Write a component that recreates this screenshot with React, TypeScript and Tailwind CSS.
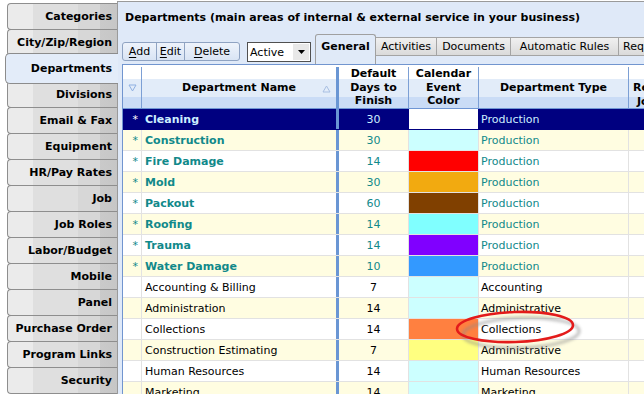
import React from "react";

const sideTabs = [
  "Categories",
  "City/Zip/Region",
  "Departments",
  "Divisions",
  "Email & Fax",
  "Equipment",
  "HR/Pay Rates",
  "Job",
  "Job Roles",
  "Labor/Budget",
  "Mobile",
  "Panel",
  "Purchase Order",
  "Program Links",
  "Security",
];

const departments = [
  { star: true, name: "Cleaning", days: 30, color: "#ffffff", type: "Production" },
  { star: true, name: "Construction", days: 30, color: "#ccffff", type: "Production" },
  { star: true, name: "Fire Damage", days: 14, color: "#ff0000", type: "Production" },
  { star: true, name: "Mold", days: 30, color: "#f2aa10", type: "Production" },
  { star: true, name: "Packout", days: 60, color: "#804000", type: "Production" },
  { star: true, name: "Roofing", days: 14, color: "#80ffff", type: "Production" },
  { star: true, name: "Trauma", days: 14, color: "#8000ff", type: "Production" },
  { star: true, name: "Water Damage", days: 10, color: "#3399ff", type: "Production" },
  { star: false, name: "Accounting & Billing", days: 7, color: "#ccffff", type: "Accounting" },
  { star: false, name: "Administration", days: 14, color: "#ccffff", type: "Administrative" },
  { star: false, name: "Collections", days: 14, color: "#ff8040", type: "Collections" },
  { star: false, name: "Construction Estimating", days: 7, color: "#ffff80", type: "Administrative" },
  { star: false, name: "Human Resources", days: 14, color: "#ccffff", type: "Human Resources" },
  { star: false, name: "Marketing", days: 14, color: "#ccffff", type: "Marketing" },
];

const tabBg =
  "bg-[linear-gradient(90deg,#ebebeb_0%,#ebebeb_23%,#dfdfdf_23%,#dfdfdf_64%,#d7d7d7_64%,#d7d7d7_84%,#cacaca_84%,#c6c6c6_100%)]";

const grayTab =
  "mt-[3px] flex h-[19px] shrink-0 items-center border border-l-0 border-[#a4a4a4] bg-[linear-gradient(#f0f0f0,#dadada)]";

function SideTab({ label, selected }: { label: string; selected: boolean }) {
  if (selected) {
    return (
      <div className="relative z-10 -mt-[3px] -mb-[2px] ml-[5px] mr-[-1px] flex h-[31px] items-center justify-end rounded-l-[5px] border border-r-0 border-[#8c8c8c] bg-[#e3ecf9] pr-[6px] font-bold">
        {label}
      </div>
    );
  }
  return (
    <div
      className={`-mt-px ml-[7px] flex h-[27px] items-center justify-end rounded-l-[4px] border border-r-0 border-[#8e8e8e] pr-[5px] font-bold first:mt-[3px] ${tabBg}`}
    >
      {label}
    </div>
  );
}

function Key({ k, rest }: { k: string; rest: string }) {
  return (
    <span>
      <span className="underline underline-offset-2">{k}</span>
      {rest}
    </span>
  );
}

export default function App() {
  return (
    <div className="relative flex h-[394px] w-[644px] overflow-hidden bg-white font-['DejaVu_Sans',sans-serif] text-[11px] leading-[13px] text-black">
      {/* Side tabs */}
      <div className="flex w-[117px] shrink-0 flex-col">
        {sideTabs.map((t) => (
          <SideTab key={t} label={t} selected={t === "Departments"} />
        ))}
      </div>

      {/* Main panel */}
      <div className="mt-px flex min-w-0 flex-1 flex-col border-l border-t border-[#9a9a9a] bg-[#dfe9f8]">
        <div className="h-[32px] shrink-0 pl-[7px] pt-[9px] font-bold whitespace-nowrap">
          Departments (main areas of internal &amp; external service in your business)
        </div>

        {/* Toolbar */}
        <div className="flex h-[30px] shrink-0 items-start pl-[4px] whitespace-nowrap">
          <div className="mt-[8px] flex h-[19px] shrink-0 overflow-hidden rounded-[3px] border border-[#8fa3c2] bg-[linear-gradient(#eef3fb,#d9e4f4)]">
            <div className="flex w-[34px] items-center justify-center border-r border-[#8fa3c2]">
              <Key k="A" rest="dd" />
            </div>
            <div className="flex w-[28px] items-center justify-center border-r border-[#8fa3c2]">
              <Key k="E" rest="dit" />
            </div>
            <div className="flex w-[54px] items-center justify-center">
              <Key k="D" rest="elete" />
            </div>
          </div>
          <div className="ml-[7px] mt-[8px] flex h-[20px] w-[64px] shrink-0 items-center border border-[#505050] bg-white pl-[2px]">
            <span className="flex-1">Active</span>
            <div className="mr-px flex h-[16px] w-[16px] items-center justify-center bg-[#e8e8e8]">
              <svg width="7" height="4" viewBox="0 0 7 4">
                <polygon points="0,0 7,0 3.5,4" fill="#000" />
              </svg>
            </div>
          </div>
          <div className="ml-[4px] flex shrink-0 items-start">
            <div className="relative z-10 flex h-[30px] w-[61px] shrink-0 items-start justify-center rounded-t-[3px] border border-b-0 border-[#a0a0a0] bg-[#e0eaf8] pt-[5px] font-bold">
              General
            </div>
            <div className={`${grayTab} w-[61px] justify-center`}>Activities</div>
            <div className={`${grayTab} w-[74px] justify-center`}>Documents</div>
            <div className={`${grayTab} w-[108px] justify-center`}>Automatic Rules</div>
            <div className={`${grayTab} w-[100px] pl-[4px]`}>Required Fields</div>
          </div>
        </div>

        {/* Grid */}
        <div className="ml-[4px] flex flex-col border-l border-t border-[#7195cf] bg-white">
          {/* Header */}
          <div className="flex h-[44px] shrink-0 border-b border-[#6f96d4] bg-[linear-gradient(#ffffff_0%,#ffffff_33%,#e2ecf9_33%,#e2ecf9_74%,#cadcf6_74%,#cadcf6_100%)] pt-[2px] font-bold">
            <div className="flex w-[19px] shrink-0 items-center justify-center border-r border-[#7c9fd5]">
              <svg width="9" height="8" viewBox="0 0 9 8">
                <polygon points="1,1 8,1 4.5,7" fill="none" stroke="#8fb0e2" strokeWidth="1" />
              </svg>
            </div>
            <div className="relative flex w-[197px] shrink-0 items-center justify-center border-r-[3px] border-[#6a96d4]">
              Department Name
              <svg className="absolute right-[5px] top-[18px]" width="9" height="8" viewBox="0 0 9 8">
                <polygon points="1,7 8,7 4.5,1" fill="none" stroke="#a8bfe2" strokeWidth="1" />
              </svg>
            </div>
            <div className="flex w-[70px] shrink-0 items-center justify-center border-r border-[#7c9fd5] text-center leading-[13.5px]">
              Default
              <br />
              Days to
              <br />
              Finish
            </div>
            <div className="flex w-[70px] shrink-0 items-center justify-center border-r border-[#7c9fd5] text-center leading-[13.5px]">
              Calendar
              <br />
              Event
              <br />
              Color
            </div>
            <div className="flex w-[150px] shrink-0 items-center justify-center border-r border-[#7c9fd5]">
              Department Type
            </div>
            <div className="flex w-[90px] shrink-0 flex-col justify-center whitespace-nowrap pt-[14px] leading-[13.5px]">
              <span className="pl-[4px]">Required</span>
              <span className="pl-[8px]">Job #</span>
            </div>
          </div>

          {/* Rows */}
          {departments.map((d, i) => {
            const sel = i === 0;
            const bg = sel ? "bg-[#000080]" : i % 2 === 1 ? "bg-[#fffde1]" : "bg-white";
            const tone = sel ? "text-[#cdeeff]" : d.star ? "text-[#11898a]" : "text-black";
            const line = sel ? "border-[#000080]" : "border-[#e2e2e2]";
            return (
              <div key={d.name} className={`flex h-[21px] shrink-0 border-b ${line} ${bg}`}>
                <div className={`flex w-[19px] shrink-0 items-center justify-end border-r pr-[3px] ${line} ${sel ? "text-white" : "text-[#11898a]"}`}>
                  {d.star ? "*" : ""}
                </div>
                <div className={`flex w-[197px] shrink-0 items-center border-r-[3px] border-[#6a96d4] pl-[3px] whitespace-nowrap ${tone} ${d.star ? "font-bold" : ""}`}>
                  {d.name}
                </div>
                <div className={`flex w-[70px] shrink-0 items-center justify-center border-r ${line} ${tone}`}>
                  {d.days}
                </div>
                <div className={`w-[70px] shrink-0 border-r ${line}`}>
                  <div className="h-full w-full" style={{ backgroundColor: d.color }} />
                </div>
                <div className={`flex w-[150px] shrink-0 items-center border-r ${line} pl-[2px] whitespace-nowrap ${tone}`}>
                  {d.type}
                </div>
                <div className="w-[90px] shrink-0" />
              </div>
            );
          })}
        </div>
      </div>

      {/* Red annotation ring */}
      <svg className="absolute left-[448px] top-[304px]" width="140" height="50" viewBox="0 0 140 50">
        <defs>
          <filter id="soft" x="-20%" y="-50%" width="140%" height="200%">
            <feGaussianBlur stdDeviation="1.6" />
          </filter>
        </defs>
        <ellipse cx="70" cy="26" rx="58" ry="15" fill="none" stroke="#8a8a8a" strokeWidth="3" opacity="0.55" filter="url(#soft)" transform="rotate(-2 70 26) translate(3 3)" />
        <ellipse cx="67" cy="23" rx="58" ry="15" fill="none" stroke="#e31b1b" strokeWidth="2.6" transform="rotate(-2 67 23)" />
      </svg>
    </div>
  );
}
